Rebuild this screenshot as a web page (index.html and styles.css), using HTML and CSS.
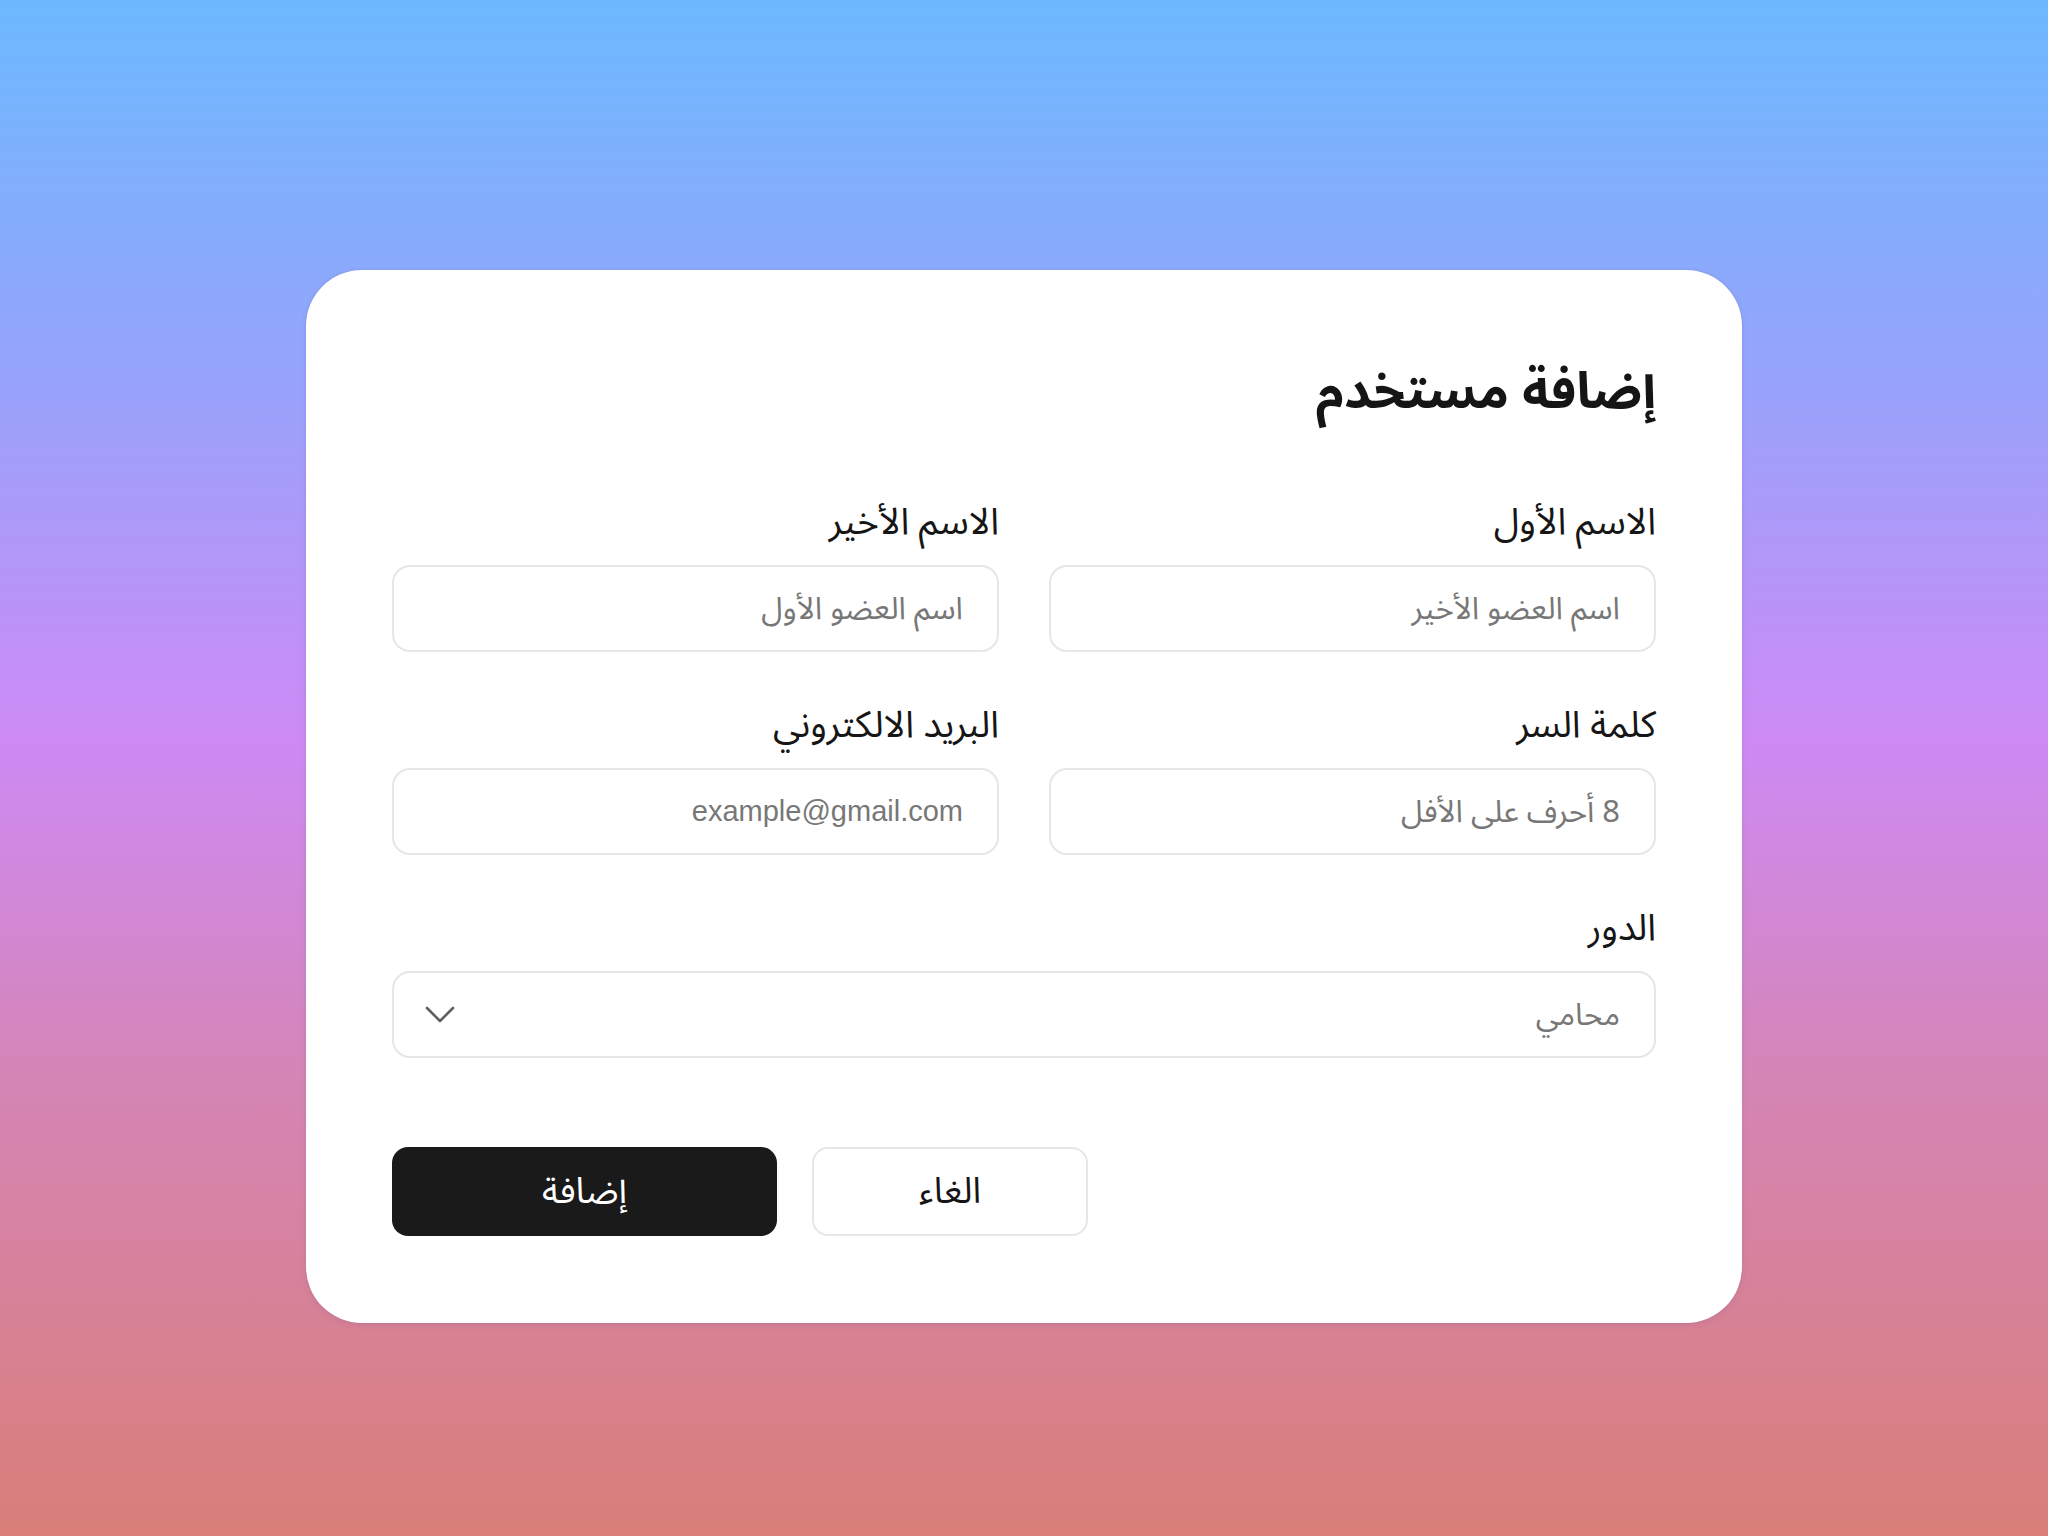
FILE: index.html
```html
<!DOCTYPE html>
<html lang="ar" dir="rtl">
<head>
<meta charset="utf-8">
<title>إضافة مستخدم</title>
<link rel="stylesheet" href="styles.css">
</head>
<body>
<main class="stage">
  <section class="card">
    <h1 class="title">إضافة مستخدم</h1>
    <div class="grid">
      <label class="field">
        <span class="label">الاسم الأول</span>
        <span class="input"><span class="ph">اسم العضو الأخير</span></span>
      </label>
      <label class="field">
        <span class="label">الاسم الأخير</span>
        <span class="input"><span class="ph">اسم العضو الأول</span></span>
      </label>
      <label class="field">
        <span class="label">كلمة السر</span>
        <span class="input"><span class="ph">8 أحرف على الأفل</span></span>
      </label>
      <label class="field">
        <span class="label">البريد الالكتروني</span>
        <span class="input"><span class="ph latin">example@gmail.com</span></span>
      </label>
      <label class="field wide">
        <span class="label">الدور</span>
        <span class="input select">
          <span class="ph">محامي</span>
          <svg class="chev" viewBox="0 0 30 17" width="30" height="17" aria-hidden="true"><path d="M2 2 L15 15 L28 2" fill="none" stroke="#5f5f5f" stroke-width="2.6" stroke-linecap="round" stroke-linejoin="round"/></svg>
        </span>
      </label>
    </div>
    <div class="actions">
      <button class="btn btn-ghost" type="button">الغاء</button>
      <button class="btn btn-primary" type="button">إضافة</button>
    </div>
  </section>
</main>
</body>
</html>
```
FILE: styles.css
```css
html, body {
  margin: 0;
  padding: 0;
}

body {
  width: 2048px;
  height: 1536px;
  background: linear-gradient(to bottom, #6cb9ff 0%, #98a3fb 25%, #cd8af5 48%, #d585b6 70%, #d97e78 100%);
  font-family: "Noto Sans Arabic", "DejaVu Sans", "Noto Sans", sans-serif;
  color: #1a1a1a;
}

.stage {
  height: 1536px;
  display: flex;
  justify-content: center;
  align-items: flex-start;
  padding-top: 270px;
  box-sizing: border-box;
}

.card {
  width: 1436px;
  box-sizing: border-box;
  background: #ffffff;
  border-radius: 56px;
  padding: 86px 86px 87px;
  box-shadow: 0 0 0 1px rgba(120, 120, 160, 0.12), 0 2px 6px rgba(80, 60, 120, 0.10);
}

.title {
  margin: 0 0 72px;
  font-size: 51px;
  line-height: 72px;
  font-weight: 700;
  color: #151515;
}

.grid {
  display: grid;
  grid-template-columns: 1fr 1fr;
  column-gap: 50px;
  row-gap: 51px;
}

.field {
  display: flex;
  flex-direction: column;
  gap: 21px;
}

.field.wide {
  grid-column: 1 / -1;
}

.label {
  font-size: 37px;
  line-height: 44px;
  color: #161616;
}

.input {
  height: 87px;
  box-sizing: border-box;
  border: 2px solid #e6e6e6;
  border-radius: 18px;
  padding: 0 34px;
  display: flex;
  align-items: center;
  justify-content: space-between;
  background: #fff;
}

.ph {
  font-size: 31px;
  color: #777777;
}

.ph.latin {
  font-size: 29px;
  font-family: "Liberation Sans", Arial, sans-serif;
  direction: ltr;
}

.select {
  padding-left: 31px;
}

.chev {
  display: block;
}

.actions {
  margin-top: 89px;
  display: flex;
  justify-content: flex-end;
  gap: 35px;
}

.btn {
  height: 89px;
  border-radius: 16px;
  font-family: inherit;
  font-size: 36px;
  cursor: pointer;
}

.btn-primary {
  width: 385px;
  background: #1a1a1a;
  color: #ffffff;
  border: none;
}

.btn-ghost {
  width: 276px;
  background: #ffffff;
  color: #151515;
  border: 2px solid #e6e6e6;
}
```
